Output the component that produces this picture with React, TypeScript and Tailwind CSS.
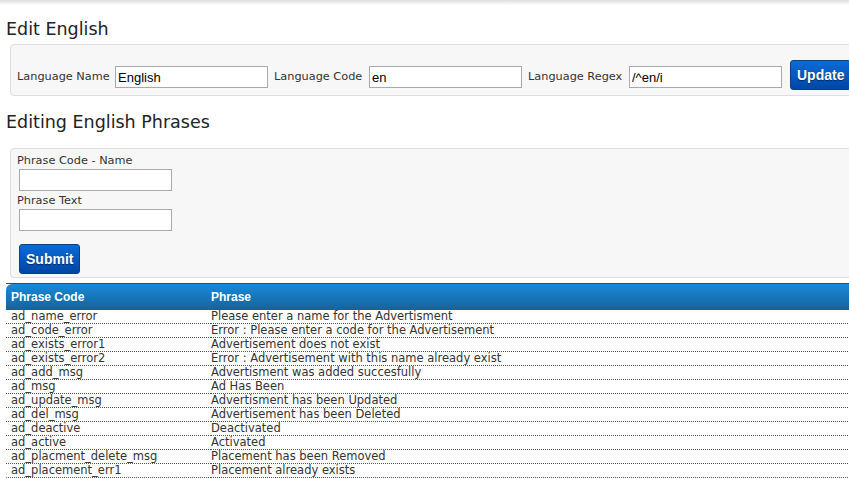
const rows: [string, string][] = [
  ["ad_name_error", "Please enter a name for the Advertisment"],
  ["ad_code_error", "Error : Please enter a code for the Advertisement"],
  ["ad_exists_error1", "Advertisement does not exist"],
  ["ad_exists_error2", "Error : Advertisement with this name already exist"],
  ["ad_add_msg", "Advertisment was added succesfully"],
  ["ad_msg", "Ad Has Been"],
  ["ad_update_msg", "Advertisment has been Updated"],
  ["ad_del_msg", "Advertisement has been Deleted"],
  ["ad_deactive", "Deactivated"],
  ["ad_active", "Activated"],
  ["ad_placment_delete_msg", "Placement has been Removed"],
  ["ad_placement_err1", "Placement already exists"],
];

const verdana = "font-['DejaVu_Sans',Verdana,sans-serif]";
const arial = "font-['Liberation_Sans',Arial,sans-serif]";

function BlueButton({ label }: { label: string }) {
  return (
    <button
      className={`h-[30px] px-[6px] rounded-[3px] border border-[#0a3f86] bg-gradient-to-b from-[#0c6cd6] to-[#0046a6] text-white text-[14px] leading-[28px] font-bold ${arial} [text-shadow:0_1px_1px_rgba(0,0,0,0.5)]`}
    >
      {label}
    </button>
  );
}

function TextInput({ value }: { value?: string }) {
  return (
    <input
      defaultValue={value}
      className={`w-[153px] h-[22px] border border-[#a9a9a9] bg-white px-[2px] text-[13px] text-black ${arial} outline-none`}
    />
  );
}

function Field({ label, value, labelWidth }: { label: string; value: string; labelWidth: string }) {
  return (
    <div className="flex items-end">
      <span className={`${labelWidth} mb-[2px] h-[22px] flex items-center text-[11.3px] text-[#333] whitespace-nowrap`}>
        {label}
      </span>
      <div className="mb-[2px] flex">
        <TextInput value={value} />
      </div>
    </div>
  );
}

export default function App() {
  return (
    <div className={`w-[849px] h-[478px] overflow-hidden bg-white ${verdana} text-[#333]`}>
      <div className="h-[5px] bg-gradient-to-b from-[#dcdcdc] to-white" />
      <h1 className="ml-[6px] mt-[12px] text-[17.5px] leading-[24px] text-[#222]">Edit English</h1>
      <div className="ml-[10px] mt-[3px] w-[860px] h-[52px] rounded-[4px] border border-[#dedede] bg-[#f7f7f7] flex items-end gap-[6px] pl-[6px] pb-[5px]">
        <Field label="Language Name" value="English" labelWidth="w-[98px]" />
        <Field label="Language Code" value="en" labelWidth="w-[95px]" />
        <Field label="Language Regex" value="/^en/i" labelWidth="w-[101px]" />
        <div className="ml-[2px] flex">
          <BlueButton label="Update" />
        </div>
      </div>
      <h2 className="ml-[6px] mt-[14px] text-[17.5px] leading-[24px] text-[#222]">Editing English Phrases</h2>
      <div className="ml-[10px] mt-[14px] w-[860px] h-[130px] rounded-[4px] border border-[#dedede] bg-[#f7f7f7] pl-[6px] pt-[5px]">
        <div className="text-[11.3px] leading-[14px]">Phrase Code - Name</div>
        <div className="ml-[2px] mt-[1px] flex">
          <TextInput />
        </div>
        <div className="text-[11.3px] leading-[14px] mt-[3px]">Phrase Text</div>
        <div className="ml-[2px] mt-[1px] flex">
          <TextInput />
        </div>
        <div className="ml-[2px] mt-[13px] flex">
          <BlueButton label="Submit" />
        </div>
      </div>
      <table className="ml-[6px] mt-[5px] w-[860px] border-collapse">
        <thead>
          <tr className={`h-[26px] bg-gradient-to-b from-[#1a8ad9] to-[#14629b] text-white text-[12px] font-bold ${arial} text-left`}>
            <th className="w-[205px] pl-[5px] font-bold rounded-tl-[6px] border-t border-[#0f5690]">Phrase Code</th>
            <th className="font-bold border-t border-[#0f5690]">Phrase</th>
          </tr>
        </thead>
        <tbody>
          {rows.map(([code, text]) => (
            <tr key={code} className="h-[14px] text-[11.5px] leading-[13px] text-[#333] border-b border-dotted border-[#555]">
              <td className="pl-[5px] p-0">{code}</td>
              <td className="p-0">{text}</td>
            </tr>
          ))}
        </tbody>
      </table>
    </div>
  );
}
